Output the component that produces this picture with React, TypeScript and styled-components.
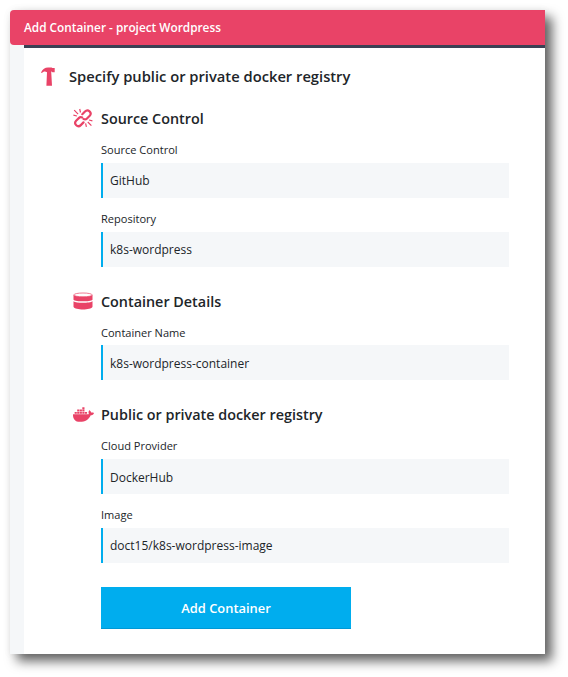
import React from "react";
import styled, { createGlobalStyle } from "styled-components";
import { FaDocker } from "react-icons/fa";

const GlobalStyle = createGlobalStyle`
  * { box-sizing: border-box; }
  body {
    margin: 0;
    background: #fff;
    color: #212529;
    font-family: "Open Sans", "Noto Sans", sans-serif;
  }
`;

const Page = styled.main`
  width: 568px;
  height: 677px;
  padding: 10px 23px 23px 10px;
  overflow: hidden;
`;

const Dialog = styled.section`
  display: flex;
  flex-direction: column;
  height: 644px;
  background: #f5f7f9;
  border-top-left-radius: 4px;
  box-shadow: 7px 7px 12px rgba(0, 0, 0, 0.62), 0 0 8px rgba(0, 0, 0, 0.05);
`;

const DialogHeader = styled.header`
  height: 35px;
  padding-left: 14px;
  border-radius: 4px 0 0 4px;
  background: #e94367;
  color: #fff;
  font-size: 11.82px;
  font-weight: 600;
  line-height: 35px;
`;

const DialogBody = styled.div`
  flex: 1;
  margin-left: 14px;
  padding: 14px 36px 0 15px;
  border-top: 3px solid #3b4054;
  background: #fff;
`;

const Title = styled.h1`
  display: flex;
  align-items: center;
  gap: 12px;
  height: 28px;
  margin: 0 0 14px;
  font-size: 14.72px;
  font-weight: 600;
`;

const IconSlot = styled.span<{ $width: number }>`
  display: flex;
  align-items: center;
  justify-content: center;
  width: ${(p) => p.$width}px;
  flex: none;
  color: #e94367;
`;

const Group = styled.section`
  margin: 0 0 20px 33px;
  &:last-of-type { margin-bottom: 24px; }
`;

const GroupTitle = styled.h2`
  display: flex;
  align-items: center;
  gap: 7px;
  height: 28px;
  margin: 0 0 9px;
  font-size: 14.36px;
  font-weight: 600;
`;

const Fields = styled.div`
  display: flex;
  flex-direction: column;
  gap: 12px;
  padding-left: 29px;
`;

const Field = styled.label<{ $gap: number }>`
  display: flex;
  flex-direction: column;
  gap: ${(p) => p.$gap}px;
`;

const Caption = styled.span`
  font-size: 11.05px;
  line-height: 18px;
`;

const Value = styled.span<{ $lineHeight: number }>`
  height: 35px;
  padding-left: 7px;
  border-left: 2px solid #00adee;
  background: #f5f7f9;
  font-size: 12px;
  line-height: ${(p) => p.$lineHeight}px;
`;

const SubmitButton = styled.button`
  display: block;
  width: 250px;
  height: 42px;
  margin-left: 62px;
  padding: 0;
  border: 0;
  border-bottom: 1px solid #0098d5;
  background: #00adee;
  color: #fff;
  font: 600 12.9px "Open Sans", sans-serif;
`;

const HammerIcon = () => (
  <svg width="14" height="19" viewBox="0 0 14 19" fill="currentColor">
    <path d="M0 5.600C1.600 2.200 4 .6 7 .6h3.600L11.400 1H13.700v4.200h-2.300L10.600 4.600H10.200l.8 14.100H5.400L6 5.200C4.300 3.900 2.200 4.300.8 6z" />
  </svg>
);

const BrokenLinkIcon = () => (
  <svg width="20" height="20" viewBox="0 0 20 20" fill="none" stroke="currentColor">
    <g strokeWidth="2.200" strokeLinecap="round" strokeLinejoin="round">
      <path d="M9.300 6.200L12 3.500c3-3 7.500 1.200 4.700 4.300L14 10.500c-1 1-2.200 1.100-3.400.6" />
      <path d="M10.500 14.400L7.800 17.100c-3 3-7.500-1.200-4.700-4.300L5.800 10.100c1-1 2.200-1.100 3.400-.6" />
    </g>
    <path strokeWidth="1.200" d="M1.200 2.200l3.900 3.900M6.700 1l.8 3.500M.4 7.200l3.500.8M14.800 14l3.600 3.700M12.600 15.400l.8 3.500M16 12l3.400.9" />
  </svg>
);

const DatabaseIcon = () => (
  <svg width="20" height="18" viewBox="0 0 20 18">
    <path fill="currentColor" d="M.5 3v4.700C2.500 9.900 17.500 9.900 19.500 7.700V3zM.5 9.300v5.500C2 18.400 18 18.400 19.500 14.800V9.300C17 11.300 3 11.300 .5 9.300z" />
    <ellipse cx="10" cy="2.900" rx="9.200" ry="1.900" fill="#fff" stroke="currentColor" strokeWidth=".7" />
  </svg>
);

type GroupData = {
  title: string;
  icon: React.ReactNode;
  gap: number;
  fields: [caption: string, value: string, lineHeight: number][];
};

const groups: GroupData[] = [
  {
    title: "Source Control",
    icon: <BrokenLinkIcon />,
    gap: 4,
    fields: [["Source Control", "GitHub", 35], ["Repository", "k8s-wordpress", 35]],
  },
  {
    title: "Container Details",
    icon: <DatabaseIcon />,
    gap: 3,
    fields: [["Container Name", "k8s-wordpress-container", 37]],
  },
  {
    title: "Public or private docker registry",
    icon: <FaDocker size={21} />,
    gap: 4,
    fields: [["Cloud Provider", "DockerHub", 37], ["Image", "doct15/k8s-wordpress-image", 35]],
  },
];

export default function App() {
  return (
    <Page>
      <GlobalStyle />
      <Dialog>
        <DialogHeader>Add Container - project Wordpress</DialogHeader>
        <DialogBody>
          <Title>
            <IconSlot $width={18}><HammerIcon /></IconSlot>
            Specify public or private docker registry
          </Title>
          {groups.map((g) => (
            <Group key={g.title}>
              <GroupTitle>
                <IconSlot $width={22}>{g.icon}</IconSlot>
                {g.title}
              </GroupTitle>
              <Fields>
                {g.fields.map(([caption, value, lineHeight]) => (
                  <Field key={caption} $gap={g.gap}>
                    <Caption>{caption}</Caption>
                    <Value $lineHeight={lineHeight}>{value}</Value>
                  </Field>
                ))}
              </Fields>
            </Group>
          ))}
          <SubmitButton>Add Container</SubmitButton>
        </DialogBody>
      </Dialog>
    </Page>
  );
}
